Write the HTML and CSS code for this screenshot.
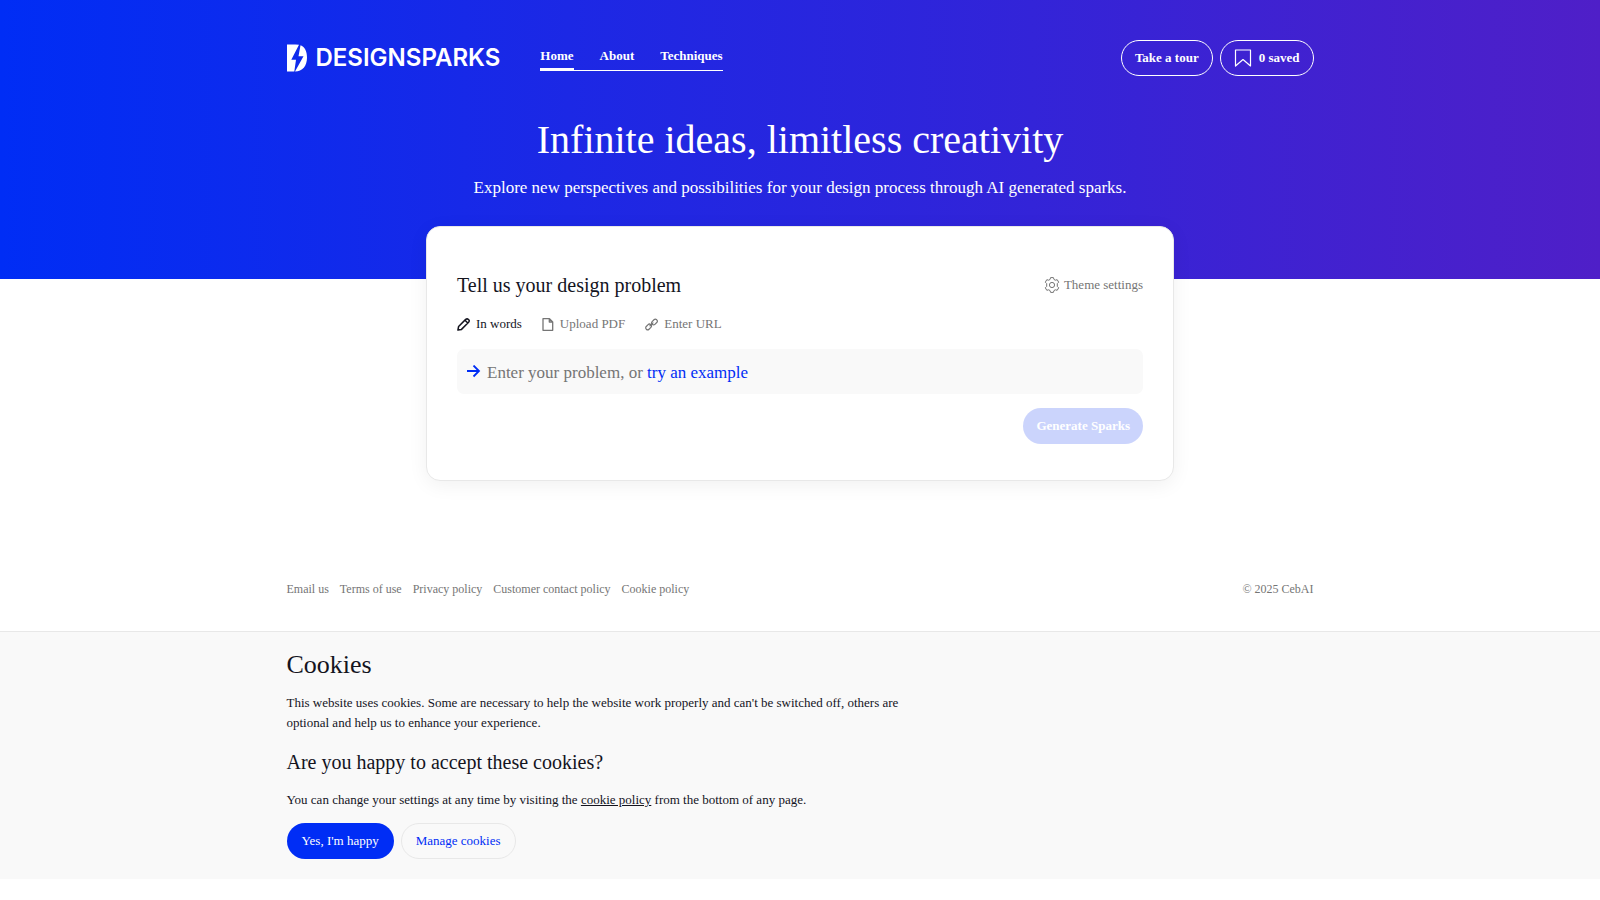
FILE: index.html
```
<!DOCTYPE html>
<html lang="en">
<head>
    <meta charset="UTF-8">
    <meta name="viewport" content="width=device-width, initial-scale=1.0">
    <title>DesignSparks</title>
    <link rel="stylesheet" href="styles.css">
</head>
<body>
    <div class="hero">
        <header class="container header">
            <a class="logo" href="#" aria-label="DesignSparks">
                <svg width="20" height="28" viewBox="0 0 20 28" fill="#fff">
                    <path d="M0 .500h8.500Q10.500.500 12 .800L4.300 15.800H9L7.300 27.500H0z"/>
                    <path d="M13.500 1.200C18 3 20 7.500 20 13.500 20 22 15.500 27.500 8 27.500L16.500 12.300H11.500z"/>
                </svg>
                <span>DESIGNSPARKS</span>
            </a>
            <nav class="nav">
                <a class="active" href="#">Home</a>
                <a href="#">About</a>
                <a href="#">Techniques</a>
            </nav>
            <div class="actions">
                <button class="btn btn-outline">Take a tour</button>
                <button class="btn btn-outline">
                    <svg width="18" height="18" viewBox="0 0 18 18" fill="none" stroke="currentColor" stroke-width="1.200" stroke-linejoin="round"><path d="M1.500 1h15v16L9 10.500 1.500 17z"/></svg>
                    0 saved
                </button>
            </div>
        </header>
        <div class="intro">
            <h1>Infinite ideas, limitless creativity</h1>
            <p>Explore new perspectives and possibilities for your design process through AI generated sparks.</p>
        </div>
    </div>

    <main class="card">
        <div class="card-head">
            <h2>Tell us your design problem</h2>
            <button class="link-btn">
                <svg width="16" height="16" viewBox="0 0 16 16" fill="none" stroke="currentColor" stroke-width="1" stroke-linejoin="round">
                    <path d="M6 2.500 6.600.600h2.800L10 2.500l1.300.700 1.900-.500 1.500 2.500L13.300 6.600v2.800l1.400 1.400-1.500 2.500-1.900-.5-1.300.7-.6 1.900H6.600L6 13.500l-1.300-.7-1.900.5-1.500-2.500 1.400-1.400V6.600L1.300 5.200l1.500-2.500 1.900.5z"/>
                    <circle cx="8" cy="8" r="2.600"/>
                </svg>
                Theme settings
            </button>
        </div>
        <div class="tabs">
            <button class="tab selected">
                <svg width="13" height="13" viewBox="0 0 13 13" fill="none" stroke="currentColor" stroke-width="1.500" stroke-linejoin="round"><path d="M.900 12.100 1.600 8.500 8.700 1.400Q10.100.300 11.500 1.500T11.600 4.300L4.500 11.400zM8 2.200 10.800 5"/></svg>
                In words
            </button>
            <button class="tab">
                <svg width="12" height="13" viewBox="0 0 12 13" fill="none" stroke="currentColor" stroke-width="1.300" stroke-linejoin="round"><path d="M1 .700h6.500L10.700 4v8.300H1zM7.300.700V4h3.400"/></svg>
                Upload PDF
            </button>
            <button class="tab">
                <svg width="13" height="13" viewBox="0 0 13 13" fill="none" stroke="currentColor" stroke-width="1.200" stroke-linecap="round"><rect x="6.200" y="2.100" width="6.400" height="3.900" rx="1.900" transform="rotate(-45 9.400 4)"/><rect x=".400" y="7" width="6.400" height="3.900" rx="1.900" transform="rotate(-45 3.600 9)"/><path d="M5 7.800 8 4.900"/></svg>
                Enter URL
            </button>
        </div>
        <div class="problem">
            <svg width="14" height="14" viewBox="0 0 14 14" fill="none" stroke="#002df5" stroke-width="1.800"><path d="M0 6h11.500M6.500 .500 12 6 6.500 11.500"/></svg>
            <p>Enter your problem, or <a href="#">try an example</a></p>
        </div>
        <div class="submit">
            <button class="btn btn-primary" disabled>Generate Sparks</button>
        </div>
    </main>

    <footer class="container footer">
        <nav class="footer-links">
            <a href="#">Email us</a>
            <a href="#">Terms of use</a>
            <a href="#">Privacy policy</a>
            <a href="#">Customer contact policy</a>
            <a href="#">Cookie policy</a>
        </nav>
        <span>© 2025 CebAI</span>
    </footer>

    <section class="cookies">
        <div class="container">
            <h2>Cookies</h2>
            <p>This website uses cookies. Some are necessary to help the website work properly and can't be switched off, others are optional and help us to enhance your experience.</p>
            <h3>Are you happy to accept these cookies?</h3>
            <p>You can change your settings at any time by visiting the <a href="#">cookie policy</a> from the bottom of any page.</p>
            <div class="cookie-actions">
                <button class="btn btn-primary">Yes, I'm happy</button>
                <button class="btn btn-light">Manage cookies</button>
            </div>
        </div>
    </section>
</body>
</html>
```
FILE: styles.css
```
* {
    box-sizing: border-box;
}
body {
    margin: 0;
    font-family: "Liberation Serif", "Times New Roman", serif;
    font-size: 13px;
    line-height: 20px;
    color: #14141e;
    background: #fff;
}
h1, h2, h3, p {
    margin: 0;
    font-weight: 400;
}
a {
    color: inherit;
    text-decoration: none;
}
button {
    font-family: inherit;
    font-size: 13px;
    line-height: 20px;
    cursor: pointer;
}
svg {
    flex-shrink: 0;
}
.container {
    width: 100%;
    max-width: 1067px;
    margin: 0 auto;
    padding: 0 20px;
}
.hero {
    padding: 40px 0 81px;
    color: #fff;
    background: linear-gradient(90deg, #002df5, #4f1fc8);
}
.header {
    display: flex;
    align-items: center;
}
.logo {
    display: flex;
    align-items: center;
    gap: 9px;
    margin-right: 40px;
    font-family: Inter, sans-serif;
    font-size: 24px;
    font-weight: 600;
}
.nav {
    display: flex;
    gap: 26px;
    border-bottom: 1px solid #fff;
    font-weight: 700;
}
.nav a {
    padding-bottom: 2px;
}
.nav .active {
    border-bottom: 2px solid #fff;
}
.actions {
    display: flex;
    gap: 7px;
    margin-left: auto;
}
.btn {
    display: flex;
    align-items: center;
    gap: 7px;
    height: 36px;
    padding: 0 14px;
    border: 1px solid transparent;
    border-radius: 18px;
}
.btn-outline {
    padding: 0 13px;
    color: #fff;
    background: none;
    border-color: #fff;
    font-weight: 700;
}
.btn-primary {
    color: #fff;
    background: #002df5;
}
.btn-primary:disabled {
    padding: 0 12px;
    opacity: 0.2;
    font-weight: 700;
    cursor: default;
}
.btn-light {
    color: #002df5;
    background: none;
    border-color: #e8e8e8;
}
.intro {
    padding: 39px 20px 0;
    text-align: center;
}
.intro h1 {
    font-size: 40px;
    line-height: 50px;
}
.intro p {
    margin-top: 13px;
    font-size: 17px;
}
.card {
    max-width: 748px;
    margin: -53px auto 0;
    padding: 45px 30px 36px;
    background: #fff;
    border: 1px solid #e8e8e8;
    border-radius: 14px;
    box-shadow: 0 4px 20px rgba(0, 0, 0, 0.06);
}
.card-head {
    display: flex;
    justify-content: space-between;
    align-items: center;
}
.card-head h2 {
    font-size: 20px;
    line-height: 26px;
}
.link-btn,
.tab {
    display: flex;
    align-items: center;
    gap: 6px;
    padding: 0;
    border: none;
    background: none;
    color: #757575;
}
.link-btn {
    gap: 4px;
}
.tabs {
    display: flex;
    gap: 20px;
    margin-top: 16px;
}
.tab.selected {
    color: #14141e;
}
.problem {
    display: flex;
    align-items: center;
    gap: 6px;
    margin-top: 15px;
    padding: 12px 10px 11px;
    border-radius: 7px;
    background: #f9f9f9;
    color: #757575;
    font-size: 17px;
}
.problem p {
    padding-top: 2px;
}
.problem a {
    color: #002df5;
}
.submit {
    display: flex;
    justify-content: flex-end;
    margin-top: 14px;
}
.footer {
    display: flex;
    justify-content: space-between;
    margin-top: 98px;
    margin-bottom: 32px;
    color: #757575;
    font-size: 12px;
}
.footer-links {
    display: flex;
    gap: 11px;
}
.cookies {
    padding: 16px 0 20px;
    border-top: 1px solid #e8e8e8;
    background: #f9f9f9;
}
.cookies h2 {
    margin-bottom: 12px;
    font-size: 26px;
    line-height: 33px;
}
.cookies h3 {
    margin: 16px 0 15px;
    font-size: 20px;
    line-height: 26px;
}
.cookies p {
    max-width: 640px;
}
.cookies p a {
    text-decoration: underline;
}
.cookie-actions {
    display: flex;
    gap: 7px;
    margin-top: 13px;
}
```
